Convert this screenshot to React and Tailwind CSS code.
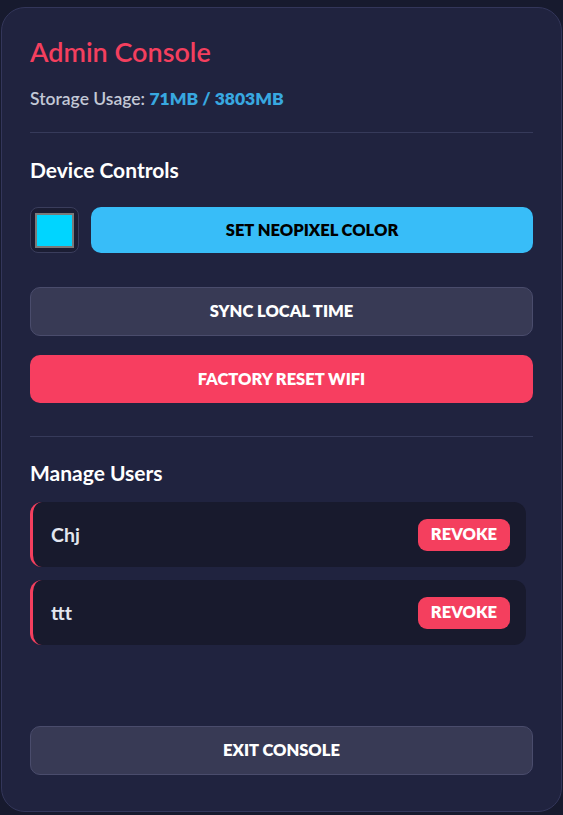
import React, { useState } from 'react'

const users = ['Chj', 'ttt']

export default function App() {
  const [color, setColor] = useState('#00d5ff')

  return (
    <div className="min-h-screen bg-[#171a2e] pt-[7px] pb-[3px] px-px font-['Lato','Inter',sans-serif]">
      <div className="h-[805px] flex flex-col rounded-[24px] border border-[#33365a] bg-[#20233f] px-7 pt-7 pb-[36px]">
        <h1 className="text-[27px] leading-8 font-semibold text-[#f43f5e]">Admin Console</h1>
        <p className="mt-[19px] text-[17.5px] leading-6 font-semibold text-[#c3c8d6]">
          Storage Usage: <span className="font-extrabold text-[#38a8e0]">71MB / 3803MB</span>
        </p>

        <div className="mt-[21px] h-px bg-[#363a5a]" />

        <h2 className="mt-[23px] text-[21px] leading-7 font-bold text-white">Device Controls</h2>

        <div className="mt-[23px] flex gap-3 h-[46px]">
          <label className="w-[49px] h-[46px] rounded-[8px] border border-[#3a3d5c] bg-[#1b1d33] flex items-center justify-center">
            <span className="w-[39px] h-[35px] border-2 border-[#7a7a7a]" style={{ backgroundColor: color }} />
            <input type="color" value={color} onChange={e => setColor(e.target.value)} className="hidden" />
          </label>
          <button className="flex-1 rounded-[10px] bg-[#38bdf8] text-[16.5px] font-extrabold text-black">SET NEOPIXEL COLOR</button>
        </div>

        <button className="mt-[34px] h-[49px] rounded-[10px] border border-[#4a4c6c] bg-[#383a55] text-[16.5px] font-extrabold text-white">
          SYNC LOCAL TIME
        </button>
        <button className="mt-[19px] h-[48px] rounded-[10px] bg-[#f73e60] text-[16.5px] font-extrabold text-white">
          FACTORY RESET WIFI
        </button>

        <div className="mt-[33px] h-px bg-[#363a5a]" />

        <h2 className="mt-[22px] text-[21px] leading-7 font-bold text-white">Manage Users</h2>

        <div className="mt-[15px] pr-[7px] flex flex-col gap-[13px]">
          {users.map(u => (
            <div key={u} className="h-[65px] flex items-center justify-between rounded-[12px] border-l-[3px] border-[#f43f5e] bg-[#181a2d] pl-[18px] pr-[16px]">
              <span className="text-[19.5px] font-bold text-[#e2e6ef]">{u}</span>
              <button className="h-[32px] px-[13px] rounded-[9px] bg-[#f43f5e] text-[16.5px] font-extrabold text-white">REVOKE</button>
            </div>
          ))}
        </div>

        <button className="mt-auto h-[49px] rounded-[10px] border border-[#4a4c6c] bg-[#383a55] text-[16.5px] font-extrabold text-white">
          EXIT CONSOLE
        </button>
      </div>
    </div>
  )
}
